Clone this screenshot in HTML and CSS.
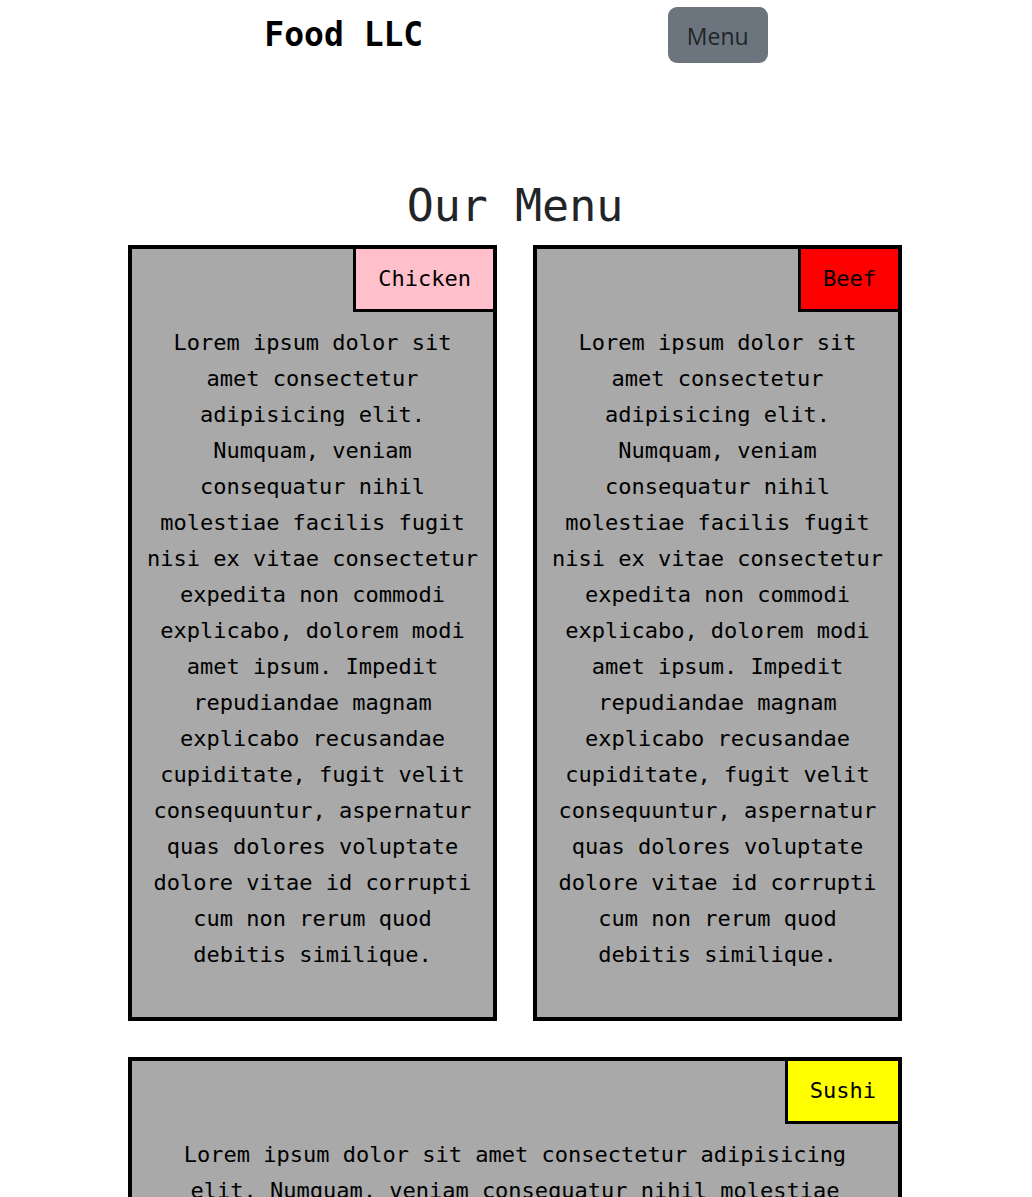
FILE: index.html
```html
<!DOCTYPE html>
<html lang="en">
<head>
<meta charset="utf-8">
<meta name="viewport" content="width=device-width, initial-scale=1">
<title>Food LLC</title>
<link rel="stylesheet" href="styles.css">
</head>
<body>
<header class="site-header">
  <a class="brand" href="#">Food LLC</a>
  <button class="menu-button" type="button">Menu</button>
</header>
<main class="menu">
  <h1 class="menu-title">Our Menu</h1>
  <div class="cards">
    <section class="card">
      <h2 class="tag tag-chicken">Chicken</h2>
      <p class="card-text">Lorem ipsum dolor sit amet consectetur adipisicing elit. Numquam, veniam consequatur nihil molestiae facilis fugit nisi ex vitae consectetur expedita non commodi explicabo, dolorem modi amet ipsum. Impedit repudiandae magnam explicabo recusandae cupiditate, fugit velit consequuntur, aspernatur quas dolores voluptate dolore vitae id corrupti cum non rerum quod debitis similique.</p>
    </section>
    <section class="card">
      <h2 class="tag tag-beef">Beef</h2>
      <p class="card-text">Lorem ipsum dolor sit amet consectetur adipisicing elit. Numquam, veniam consequatur nihil molestiae facilis fugit nisi ex vitae consectetur expedita non commodi explicabo, dolorem modi amet ipsum. Impedit repudiandae magnam explicabo recusandae cupiditate, fugit velit consequuntur, aspernatur quas dolores voluptate dolore vitae id corrupti cum non rerum quod debitis similique.</p>
    </section>
    <section class="card card-wide">
      <h2 class="tag tag-sushi">Sushi</h2>
      <p class="card-text">Lorem ipsum dolor sit amet consectetur adipisicing elit. Numquam, veniam consequatur nihil molestiae facilis fugit nisi ex vitae consectetur expedita non commodi explicabo, dolorem modi amet ipsum. Impedit repudiandae magnam explicabo recusandae cupiditate, fugit velit consequuntur, aspernatur quas dolores voluptate dolore vitae id corrupti cum non rerum quod debitis similique.</p>
    </section>
  </div>
</main>
</body>
</html>
```
FILE: styles.css
```css
* {
  box-sizing: border-box;
}

body {
  margin: 0;
  background: #fff;
  color: #212529;
  font-family: Consolas, "DejaVu Sans Mono", monospace;
  font-size: 22px;
  line-height: 36px;
}

.site-header {
  display: flex;
  justify-content: space-around;
  align-items: center;
  padding: 7px 142px;
}

.brand {
  color: #000;
  font-size: 33px;
  font-weight: 700;
  text-decoration: none;
}

.menu-button {
  padding: 11px 19px 9px;
  border: 0;
  border-radius: 9px;
  background: #6c757d;
  color: #212529;
  font-family: "Open Sans", sans-serif;
  font-size: 23px;
  line-height: 36px;
}

.menu {
  padding: 108px 130px 36px 128px;
}

.menu-title {
  margin: 0 0 12px;
  font-size: 45px;
  font-weight: 400;
  line-height: 55px;
  text-align: center;
}

.cards {
  display: grid;
  grid-template-columns: 1fr 1fr;
  gap: 36px;
}

.card {
  display: flex;
  flex-direction: column;
  padding-bottom: 44px;
  border: 4px solid #000;
  background: #a9a9a9;
  color: #000;
}

.card-wide {
  grid-column: 1 / -1;
}

.tag {
  align-self: flex-end;
  margin: 0;
  padding: 12px 22px;
  border: solid #000;
  border-width: 0 0 3px 3px;
  font-size: 22px;
  font-weight: 400;
}

.tag-chicken {
  background: pink;
}

.tag-beef {
  background: red;
}

.tag-sushi {
  background: yellow;
}

.card-text {
  margin: 13px 0 0;
  padding: 0 14px;
  text-align: center;
}
```
